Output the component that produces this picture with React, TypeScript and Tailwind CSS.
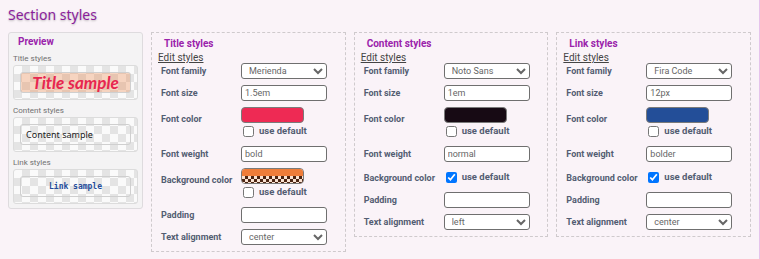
import { FC, ReactNode } from 'react'

const checker =
  'bg-[image:repeating-conic-gradient(#e4e4e4_0_25%,#fafafa_0_50%)] bg-[length:16px_16px]'

const labelCls = 'text-[9px] font-bold text-[#535d72] leading-none'
const inputCls =
  'h-[16px] w-[86px] rounded-[3px] border border-[#6f6f6f] bg-white px-[3px] text-[9px] text-[#666] leading-none outline-none'

const Field: FC<{ label: string; children: ReactNode; shift?: boolean }> = ({ label, children, shift }) => (
  <>
    <div className={shift ? `${labelCls} mb-[9px]` : labelCls}>{label}</div>
    <div>{children}</div>
  </>
)

const Select: FC<{ value: string; options: string[] }> = ({ value, options }) => (
  <select defaultValue={value} className={`${inputCls} block px-[2px]`}>
    {options.map((o) => (
      <option key={o}>{o}</option>
    ))}
  </select>
)

const Text: FC<{ value?: string }> = ({ value = '' }) => (
  <input type="text" defaultValue={value} className={`${inputCls} block`} />
)

const UseDefault: FC<{ checked?: boolean }> = ({ checked }) => (
  <label className="flex h-[17px] items-center gap-[5px] pl-[2px] text-[9.5px] font-bold text-[#535d72]">
    <input type="checkbox" defaultChecked={checked} className="m-0 h-[11px] w-[11px]" />
    <span>use default</span>
  </label>
)

const Swatch: FC<{ color: string }> = ({ color }) => (
  <div className="h-[16px] w-[63px] rounded-[4px] border border-[#7a7a7a]" style={{ background: color }} />
)

const AlphaSwatch = () => (
  <div className="h-[16px] w-[63px] overflow-hidden rounded-[4px] border border-[#7a7a7a]">
    <div className="h-[7px] bg-[#ef7d3a]" />
    <div className="h-[8px] bg-[image:repeating-conic-gradient(#4b2412_0_25%,#fbe3d3_0_50%)] bg-[length:6px_6px]" />
  </div>
)

interface PanelProps {
  title: string
  family: string
  size: string
  color: string
  weight: string
  bg?: boolean
  align: string
}

const Panel: FC<PanelProps> = ({ title, family, size, color, weight, bg, align }) => (
  <div className="w-[195px] self-start border border-dashed border-[#cfcacd] pt-[5px] pb-[6px] pl-[6px]">
    <div className="pl-[6px] text-[10px] font-bold leading-[12px] text-[#9a23ab]">{title}</div>
    <div className="mt-[2px] text-[10px] leading-[11px] text-[#444] underline">Edit styles</div>
    <div className="grid grid-cols-[80px_86px] items-center gap-y-[6px] pl-[3px]">
      <Field label="Font family">
        <Select value={family} options={['Merienda', 'Noto Sans', 'Fira Code']} />
      </Field>
      <Field label="Font size">
        <Text value={size} />
      </Field>
      <Field label="Font color" shift>
        <Swatch color={color} />
        <UseDefault />
      </Field>
      <Field label="Font weight">
        <Text value={weight} />
      </Field>
      {bg ? (
        <Field label="Background color" shift>
          <AlphaSwatch />
          <UseDefault />
        </Field>
      ) : (
        <>
          <div className={`${labelCls} mt-[3px]`}>Background color</div>
          <div className="flex h-[18px] items-center">
            <UseDefault checked />
          </div>
        </>
      )}
      <Field label="Padding">
        <Text />
      </Field>
      <Field label="Text alignment">
        <Select value={align} options={['left', 'center', 'right']} />
      </Field>
    </div>
  </div>
)

const PreviewBox: FC<{ label: string; children: ReactNode }> = ({ label, children }) => (
  <div>
    <div className="mb-[1px] text-[8px] leading-[10px] text-[#707070]">{label}</div>
    <div className={`${checker} rounded-[3px] border border-[#dcdcdc] p-[6px]`}>{children}</div>
  </div>
)

const Preview = () => (
  <div className="flex w-[135px] shrink-0 flex-col gap-[6px] self-start rounded-[3px] border border-[#dedbde] bg-[#f4f3f4] px-[4px] pt-[3px] pb-[4px]">
    <div className="pl-[5px] text-[10px] font-bold leading-[12px] text-[#9a23ab]">Preview</div>
    <PreviewBox label="Title styles">
      <div className="flex h-[21px] items-center justify-center rounded-[3px] border border-[#cfcfcf] bg-[rgba(240,125,60,0.3)] font-['Lato'] text-[17px] font-bold italic text-[#e8264f]">
        Title sample
      </div>
    </PreviewBox>
    <PreviewBox label="Content styles">
      <div className="flex h-[21px] items-center rounded-[3px] border border-[#cfcfcf] px-[5px] font-['Noto_Sans'] text-[9px] text-[#1a1a1a]">
        Content sample
      </div>
    </PreviewBox>
    <PreviewBox label="Link styles">
      <div className="flex h-[21px] items-center justify-center rounded-[3px] border border-[#cfcfcf] font-['DejaVu_Sans_Mono'] text-[8px] font-bold text-[#244c9a]">
        Link sample
      </div>
    </PreviewBox>
  </div>
)

export default function App() {
  return (
    <div className="min-h-[259px] w-full border-r border-[#e6c3ec] bg-[#faf3f8] px-[8px] pt-[5px] font-['Roboto',sans-serif]">
      <h2 className="font-['Noto_Sans',sans-serif] text-[14px] leading-[20px] text-[#8b1d9c] [text-shadow:0_1px_2px_rgba(0,0,0,0.25)]">
        Section styles
      </h2>
      <div className="mt-[7px] flex gap-[8px]">
        <Preview />
        <Panel title="Title styles" family="Merienda" size="1.5em" color="#ee2a54" weight="bold" bg align="center" />
        <Panel title="Content styles" family="Noto Sans" size="1em" color="#170a14" weight="normal" align="left" />
        <Panel title="Link styles" family="Fira Code" size="12px" color="#234e98" weight="bolder" align="center" />
      </div>
    </div>
  )
}
